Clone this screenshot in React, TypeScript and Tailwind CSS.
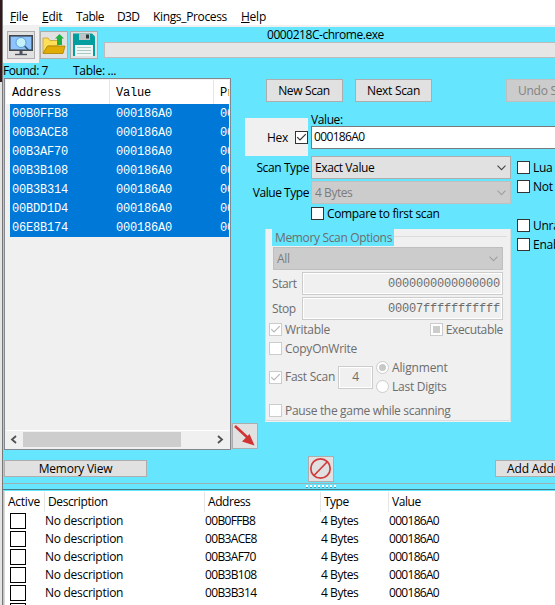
import type { ReactNode } from 'react'

const results = ['00B0FFB8', '00B3ACE8', '00B3AF70', '00B3B108', '00B3B314', '00BDD1D4', '06E8B174']
const entries = ['00B0FFB8', '00B3ACE8', '00B3AF70', '00B3B108', '00B3B314', '00BDD1D4']

const mono = 'font-["Liberation_Mono",monospace] tracking-[-0.2px]'

function Button({ className = '', children }: { className?: string; children?: ReactNode }) {
  return (
    <button className={`flex shrink-0 items-center border ${className}`}>
      {children}
    </button>
  )
}

function Check({ state = 'off', disabled = false }: { state?: 'on' | 'off' | 'mixed'; disabled?: boolean }) {
  return (
    <span
      className={`flex size-[13px] shrink-0 items-center justify-center border bg-white ${disabled ? 'border-[#cccccc] text-[#b8b8b8]' : 'border-[#333333] text-[#333333]'}`}
    >
      {state === 'on' && (
        <svg width="11" height="11" viewBox="0 0 11 11" fill="none" stroke="currentColor" strokeWidth="1.2">
          <path d="M1.2 5.2 4 8 9.800 2.200" />
        </svg>
      )}
      {state === 'mixed' && <span className="size-[7px] bg-[#cccccc]" />}
    </span>
  )
}

function Radio({ on = false }: { on?: boolean }) {
  return (
    <span className="flex size-[13px] shrink-0 items-center justify-center rounded-full border border-[#cccccc] bg-white">
      {on && <span className="size-[7px] rounded-full bg-[#c8c8c8]" />}
    </span>
  )
}

function Select({ value, disabled = false, className = '' }: { value: string; disabled?: boolean; className?: string }) {
  return (
    <div
      className={`flex h-[23px] items-center justify-between border pr-1 pl-[3px] ${disabled ? 'border-[#bfbfbf] bg-[#cccccc] text-[#7c7c7c]' : 'border-[#adadad] bg-[#e1e1e1]'} ${className}`}
    >
      <span>{value}</span>
      <svg width="9" height="6" viewBox="0 0 9 6" fill="none" stroke={disabled ? '#a0a0a0' : '#444444'} strokeWidth="1.1">
        <path d="M.5 .7 4.500 4.700 8.500 .7" />
      </svg>
    </div>
  )
}

const face = 'justify-center border-[#adadad] bg-[#e1e1e1]'

function Toolbar() {
  return (
    <div className="flex h-[38px] shrink-0">
      <div className="flex w-9 shrink-0 bg-[#f0f0f0] pt-[6px] pl-1">
        <Button className={`size-7 ${face}`}>
          <svg width="24" height="24" viewBox="0 0 24 24">
            <rect x=".8" y="2.800" width="22.400" height="14.400" fill="#8dc3ff" stroke="#3f484f" strokeWidth="1.600" />
            <path d="M10.500 18h3v3h-3z" fill="#4c555c" />
            <path d="M6 21.500h12" stroke="#4c555c" strokeWidth="1.400" />
            <path d="m15.500 13 4 4" stroke="#35556d" strokeWidth="1.600" />
            <circle cx="12" cy="9.500" r="5" fill="#c5f1fb" stroke="#5b9fd3" />
          </svg>
        </Button>
      </div>
      <div className="flex min-w-0 flex-1 pl-px">
        <Button className={`mt-[6px] size-7 ${face}`}>
          <svg width="24" height="24" viewBox="0 0 24 24">
            <path d="M1 20V5h5l2 2.500h8V13H6z" fill="#ffdf58" stroke="#c3a02c" strokeWidth=".8" />
            <path d="m1 20.500 4.500-7.500H23l-2 7.500z" fill="#e0ac05" stroke="#a88005" strokeWidth=".8" />
            <path d="M17.500 1 22 5.500h-2V12h-5V5.500h-2z" fill="#1fb141" />
          </svg>
        </Button>
        <Button className={`mt-[6px] ml-[2px] size-7 ${face}`}>
          <svg width="24" height="24" viewBox="0 0 24 24">
            <path d="M1 .5h19l3 3V23H1z" fill="#009e9e" />
            <path d="M7 .5h11V7H7z" fill="#bfc5c5" />
            <path d="M14 1.500h3v4h-3z" fill="#303838" />
            <path d="M3 12h18v11H3z" fill="#f1f6f5" />
            <path d="M5 14.500h14M5 17.500h14M5 20.500h14" stroke="#a9c9c6" />
          </svg>
        </Button>
        <div className="ml-[6px] flex flex-1 flex-col overflow-hidden pt-[2px]">
          <span className="h-[15px] pl-[163px] leading-4 tracking-[-0.45px]">0000218C-chrome.exe</span>
          <div className="h-4 border border-r-0 border-[#bcbcbc] bg-[#e6e6e6]" />
        </div>
      </div>
    </div>
  )
}

function ResultList() {
  return (
    <div className="flex h-[372px] w-[227px] shrink-0 flex-col border border-[#828790] bg-[#f0f0f0] p-px">
      <div className={`flex h-6 shrink-0 overflow-hidden bg-white text-[12px] leading-[26px] ${mono}`}>
        <span className="w-[104px] shrink-0 border-r border-[#e5e5e5] pl-[6px]">Address</span>
        <span className="w-[104px] shrink-0 border-r border-[#e5e5e5] pl-[6px]">Value</span>
        <span className="pl-[6px]">Pr</span>
      </div>
      <div className={`ml-1 overflow-hidden bg-[#0078d7] text-[12px] text-white ${mono}`}>
        {results.map((address) => (
          <div key={address} className="flex h-[19px] leading-[21px]">
            <span className="w-[104px] shrink-0 pl-[2px]">{address}</span>
            <span className="w-[104px] shrink-0 pl-[2px]">000186A0</span>
            <span className="shrink-0 pl-[2px]">00</span>
          </div>
        ))}
      </div>
      <div className="mt-auto flex h-[18px] items-center border-t border-white text-[#505050]">
        <svg width="17" height="9" viewBox="0 0 17 9" fill="none" stroke="currentColor" strokeWidth="1.8">
          <path d="m10 1-4 3.500 4 3.500" />
        </svg>
        <div className="h-[15px] w-[158px] bg-[#cdcdcd]" />
        <svg className="ml-auto" width="17" height="9" viewBox="0 0 17 9" fill="none" stroke="currentColor" strokeWidth="1.8">
          <path d="m6 1 4 3.500-4 3.500" />
        </svg>
      </div>
    </div>
  )
}

function MemoryOptions() {
  return (
    <fieldset className="mt-[9px] ml-[34px] h-[193px] w-[246px] bg-[#f0f0f0] text-[#6d6d6d]">
      <div className="h-[192px] border-r border-b border-l border-[#dcdcdc] px-[3px]">
        <div className="flex h-[17px]">
          <span className="ml-[3px] w-[122px] bg-[#66e5ff] pl-[3px] leading-[17px] tracking-[-0.35px] whitespace-nowrap">
            Memory Scan Options
          </span>
          <span className="mt-[7px] flex-1 border-t border-[#dcdcdc]" />
        </div>
        <Select value="All" disabled className="mt-px mr-1 ml-1" />
        <label className="mt-[2px] mr-1 flex h-[23px] items-center">
          <span className="w-[33px] pl-[3px] tracking-[-0.45px]">Start</span>
          <span className={`flex h-full flex-1 items-center justify-end border border-[#cccccc] pr-[2px] text-[12px] ring-1 ring-white ring-inset ${mono}`}>
            0000000000000000
          </span>
        </label>
        <label className="mt-[2px] mr-1 flex h-[23px] items-center">
          <span className="w-[33px] pt-px pl-[3px] tracking-[-0.45px]">Stop</span>
          <span className={`flex h-full flex-1 items-center justify-end border border-[#cccccc] pr-[2px] text-[12px] ring-1 ring-white ring-inset ${mono}`}>
            00007fffffffffff
          </span>
        </label>
        <div className="mt-[3px] flex h-[13px] items-center justify-between pr-1">
          <span className="flex items-center gap-[3px]"><Check state="on" disabled />Writable</span>
          <span className="flex items-center gap-[3px] tracking-[-0.35px]"><Check state="mixed" disabled />Executable</span>
        </div>
        <div className="mt-[6px] flex h-[13px] items-center gap-[3px]"><Check disabled />CopyOnWrite</div>
        <div className="mt-[6px] flex h-8 items-center">
          <span className="flex w-[69px] items-center gap-[3px] whitespace-nowrap"><Check state="on" disabled />Fast Scan</span>
          <span className="flex h-[23px] w-[35px] items-center justify-center border border-[#cccccc] ring-1 ring-white ring-inset">4</span>
          <div className="ml-[3px] flex flex-col gap-[6px]">
            <span className="flex h-[13px] items-center gap-[3px] tracking-[-0.15px]"><Radio on />Alignment</span>
            <span className="flex h-[13px] items-center gap-[3px]"><Radio />Last Digits</span>
          </div>
        </div>
        <div className="mt-[11px] flex h-[13px] items-center gap-[3px] tracking-[-0.32px]"><Check disabled />Pause the game while scanning</div>
      </div>
    </fieldset>
  )
}

function ScanPanel() {
  return (
    <div className="-ml-[27px] flex flex-1 flex-col overflow-hidden whitespace-nowrap">
      <div className="mt-px flex h-[23px] pl-[35px]">
        <Button className={`w-[77px] pr-px tracking-[-0.35px] ${face}`}>New Scan</Button>
        <Button className={`ml-3 w-[77px] tracking-[-0.3px] ${face}`}>Next Scan</Button>
        <Button className="ml-[74px] w-[77px] justify-start border-[#bfbfbf] bg-[#cccccc] pl-[11px] text-[#838383]">Undo Scan</Button>
      </div>
      <div className="mt-[9px] flex h-[45px]">
        <div className="mt-[7px] ml-[14px] flex h-[38px] w-[63px] items-center justify-between bg-[#f0f0f0] pl-[22px]">
          <span className="pt-px">Hex</span>
          <Check state="on" />
        </div>
        <div className="ml-[3px] flex-1">
          <div className="h-[15px] leading-[17px] tracking-[-0.4px]">Value:</div>
          <div className="h-[23px] border border-r-0 border-[#7a7a7a] bg-white pl-[2px] leading-[20px] tracking-[-0.65px]">000186A0</div>
        </div>
      </div>
      <div className="flex">
        <div className="w-[280px] shrink-0">
          <div className="flex h-[23px] items-center">
            <span className="w-20 pt-px pr-[2px] text-right tracking-[-0.4px]">Scan Type</span>
            <Select value="Exact Value" className="flex-1 tracking-[-0.4px]" />
          </div>
          <div className="mt-[2px] flex h-[23px] items-center">
            <span className="w-20 pt-px pr-[2px] text-right tracking-[-0.45px]">Value Type</span>
            <Select value="4 Bytes" disabled className="flex-1 tracking-[-0.45px]" />
          </div>
          <div className="mt-[3px] ml-20 flex h-[13px] items-center gap-[3px] tracking-[-0.35px]"><Check />Compare to first scan</div>
          <MemoryOptions />
        </div>
        <div className="ml-[6px] pt-[5px]">
          <div className="flex h-[13px] items-center gap-[3px]"><Check />Lua formula</div>
          <div className="mt-[6px] flex h-[13px] items-center gap-[3px]"><Check />Not</div>
          <div className="mt-[26px] flex h-[13px] items-center gap-[3px]"><Check />Unrandomizer</div>
          <div className="mt-[6px] flex h-[13px] items-center gap-[3px]"><Check />Enable Speedhack</div>
        </div>
      </div>
    </div>
  )
}

function AddressTable() {
  return (
    <div className="ml-px flex-1 overflow-hidden border-l border-[#d8d8d8] bg-white">
      <div className="mt-px flex h-5 leading-5">
        <span className="w-10 shrink-0 border-r border-[#e5e5e5] pl-[3px]">Active</span>
        <span className="w-[160px] shrink-0 border-r border-[#e5e5e5] pl-[3px] tracking-[-0.4px]">Description</span>
        <span className="w-[116px] shrink-0 border-r border-[#e5e5e5] pl-[3px] tracking-[-0.45px]">Address</span>
        <span className="w-[68px] shrink-0 border-r border-[#e5e5e5] pl-[3px] tracking-[-0.5px]">Type</span>
        <span className="pl-[3px] tracking-[-0.45px]">Value</span>
      </div>
      {entries.map((address) => (
        <div key={address} className="flex h-[18px] items-center">
          <span className="w-10 shrink-0 pl-[5px]">
            <span className="block size-4 border border-black" />
          </span>
          <span className="w-[160px] shrink-0 tracking-[-0.28px]">No description</span>
          <span className="w-[116px] shrink-0 tracking-[-0.65px]">{address}</span>
          <span className="w-[68px] shrink-0 tracking-[-0.45px]">4 Bytes</span>
          <span className="tracking-[-0.7px]">000186A0</span>
        </div>
      ))}
    </div>
  )
}

export default function App() {
  return (
    <div className='flex h-[605px] w-[555px] overflow-hidden bg-[#66e5ff] font-["Open_Sans",sans-serif] text-[12px] leading-4 tracking-[-0.25px] text-black'>
      <div className="flex w-[3px] shrink-0 flex-col border-r border-[#777777] bg-[#e4e4e4]">
        <div className="h-[82px] bg-[#32191c]" />
      </div>
      <div className="flex min-w-0 flex-1 flex-col">
        <nav className="flex h-[25px] shrink-0 bg-white pt-[9px] pl-[7px] leading-4">
          <span className="w-8"><u>F</u>ile</span>
          <span className="w-[34px]"><u>E</u>dit</span>
          <span className="w-[41px] tracking-[-0.45px]">Table</span>
          <span className="w-9 tracking-[-0.6px]">D3D</span>
          <span className="w-[88px] tracking-[-0.35px]">Kings_Process</span>
          <span><u>H</u>elp</span>
        </nav>
        <div className="flex h-[38px] shrink-0 flex-col bg-linear-to-b from-[#f0f0f0] from-[2px] to-transparent to-[2px]">
          <Toolbar />
        </div>
        <div className="flex h-[15px] shrink-0 leading-4">
          <span className="w-[70px] tracking-[-0.45px]">Found: 7</span>
          <span className="tracking-[-0.3px]">Table: ...</span>
        </div>
        <main className="flex h-[378px] shrink-0 pl-px">
          <ResultList />
          <Button className={`mt-[345px] ml-px size-[26px] ${face}`}>
            <svg width="24" height="24" viewBox="0 0 24 24">
              <path d="m2 2 13 12" stroke="#cf3333" strokeWidth="2.500" />
              <path d="M21.500 21.500 9 17.500 16.500 10z" fill="#cf3333" />
            </svg>
          </Button>
          <ScanPanel />
        </main>
        <div className="flex h-[28px] shrink-0 border-b border-[#9fb0b3] pl-px">
          <Button className={`mt-1 h-[17px] w-[143px] ${face}`}>Memory View</Button>
          <Button className={`ml-[161px] size-[26px] ${face}`}>
            <svg width="24" height="24" viewBox="0 0 24 24" fill="none" stroke="#d13b3b" strokeWidth="1.700">
              <circle cx="11.500" cy="11.500" r="9.700" />
              <path d="m5 18.500 13.500-14" />
            </svg>
          </Button>
          <Button className="mt-1 ml-[161px] h-[17px] w-[148px] justify-start border-[#adadad] bg-[#e1e1e1] pl-[11px] tracking-[-0.15px] whitespace-nowrap">
            Add Address Manually
          </Button>
        </div>
        <div className="flex h-[6px] shrink-0 gap-[2px] border-b border-[#477b87] pt-px pl-[303px]">
          {Array.from({ length: 8 }, (_, i) => (
            <span key={i} className="h-[3px] w-[2px] border-b border-[#4d9dac] bg-white" />
          ))}
        </div>
        <div className="h-px shrink-0" />
        <AddressTable />
      </div>
    </div>
  )
}
